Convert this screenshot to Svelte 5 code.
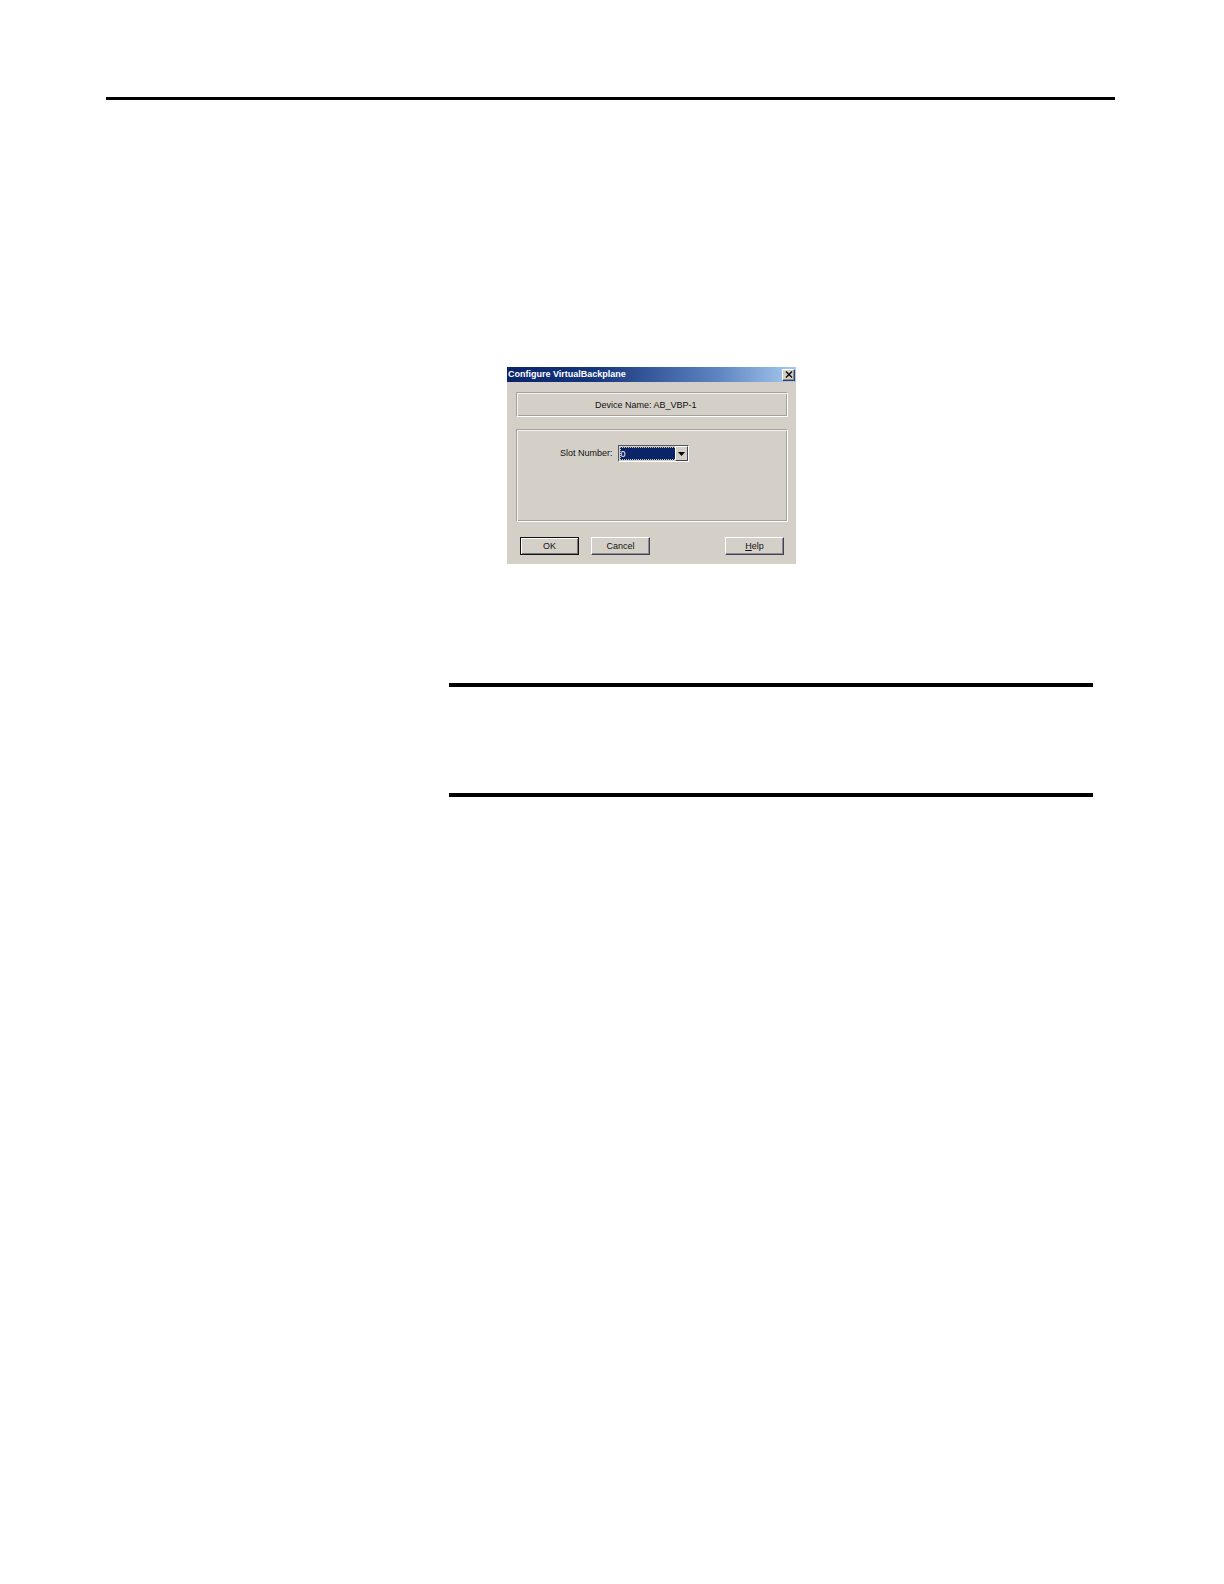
<script>
let slot = $state('0');
let open = $state(true);

const slots = Array.from({length: 17}, (_, i) => String(i));

function close() {
  open = false;
}
</script>

<main class="page">
  <hr class="rule" />
  <div class="figure">
    {#if open}
    <div class="dialog" role="dialog" aria-labelledby="dialog-title">
      <header class="titlebar">
        <h1 id="dialog-title">Configure VirtualBackplane</h1>
        <button class="close" type="button" aria-label="Close" onclick={close}>
          <svg viewBox="0 0 8 7" width="8" height="7">
            <path d="M1 0.5 L7 6.5 M7 0.5 L1 6.5" stroke="#111" stroke-width="1.5" />
          </svg>
        </button>
      </header>
      <div class="content">
        <div class="group device">
          <span>Device Name:</span>
          <span>AB_VBP-1</span>
        </div>
        <div class="group settings">
          <label for="slot">Slot Number:</label>
          <div class="combo">
            <select id="slot" bind:value={slot}>
              {#each slots as s}
              <option value={s}>{s}</option>
              {/each}
            </select>
            <span class="arrow">
              <svg viewBox="0 0 7 4" width="7" height="4"><path d="M0 0H7L3.5 4Z" fill="#000" /></svg>
            </span>
          </div>
        </div>
        <div class="actions">
          <button class="default" type="button" onclick={close}>OK</button>
          <button type="button" onclick={close}>Cancel</button>
          <button class="help" type="button"><u>H</u>elp</button>
        </div>
      </div>
    </div>
    {/if}
  </div>
  <section class="note"></section>
</main>

<style>
:global(body) {
  margin: 0;
  background: #fff;
}
.page {
  padding: 97px 109px 97px 106px;
  font-family: "Liberation Sans", Arial, sans-serif;
  font-size: 9px;
  line-height: 12px;
  color: #111;
}
.rule {
  margin: 0;
  border: 0;
  border-top: 3px solid #000;
}
.figure {
  min-height: 197px;
  margin: 267px 0 119px 401px;
}
.dialog {
  box-sizing: border-box;
  width: 289px;
  background: #d4d0c8;
}
.titlebar {
  display: flex;
  align-items: center;
  justify-content: space-between;
  height: 15px;
  padding: 0 1px;
  background: linear-gradient(90deg, #0a246a, #16367c 30%, #5c82bf 72%, #a6caf0);
}
h1 {
  margin: 0;
  font-size: 9px;
  line-height: 15px;
  color: #fff;
}
button {
  box-sizing: border-box;
  width: 59px;
  height: 18px;
  padding: 0;
  border: 1px solid;
  border-color: #fff #404058 #404058 #fff;
  box-shadow: inset -1px -1px #8f8c90;
  background: #d4d0c8;
  font: inherit;
  color: #111;
}
.close {
  display: flex;
  align-items: center;
  justify-content: center;
  width: 13px;
  height: 12px;
}
.content {
  padding: 10px 8px 9px 9px;
}
.group {
  border: 1px solid;
  border-color: #a5a29c #fff #fff #a5a29c;
  box-shadow: inset 1px 1px #f4f2ee, inset -1px -1px #a5a29c;
}
.device {
  display: flex;
  gap: 2px;
  padding: 6px 0 5px 78px;
}
.settings {
  display: flex;
  align-items: flex-start;
  gap: 5px;
  min-height: 76px;
  margin-top: 12px;
  padding: 15px 0 0 43px;
}
.settings label {
  padding-top: 2px;
}
.combo {
  position: relative;
  width: 71px;
}
select {
  display: block;
  box-sizing: border-box;
  width: 100%;
  height: 17px;
  padding: 0 15px 0 2px;
  appearance: none;
  border: 1px solid;
  border-color: #55555f #fff #fff #55555f;
  border-radius: 0;
  outline: 1px dotted #c8c8a0;
  outline-offset: -3px;
  box-shadow: inset 0 0 0 1px #d4d0c8;
  background: #0a246a;
  font: inherit;
  color: #fff;
}
.arrow {
  position: absolute;
  top: 1px;
  right: 1px;
  bottom: 1px;
  display: flex;
  align-items: center;
  justify-content: center;
  width: 11px;
  border: 1px solid;
  border-color: #fff #404058 #404058 #fff;
  background: #d4d0c8;
  pointer-events: none;
}
.actions {
  display: flex;
  gap: 12px;
  margin-top: 15px;
  padding: 0 4px;
}
.default {
  border-color: #111;
  box-shadow: inset 1px 1px #fff, inset -1px -1px #77747a;
}
.help {
  margin-left: auto;
}
.note {
  min-height: 106px;
  margin: 0 22px 0 343px;
  border: solid #000;
  border-width: 4px 0;
}
</style>
